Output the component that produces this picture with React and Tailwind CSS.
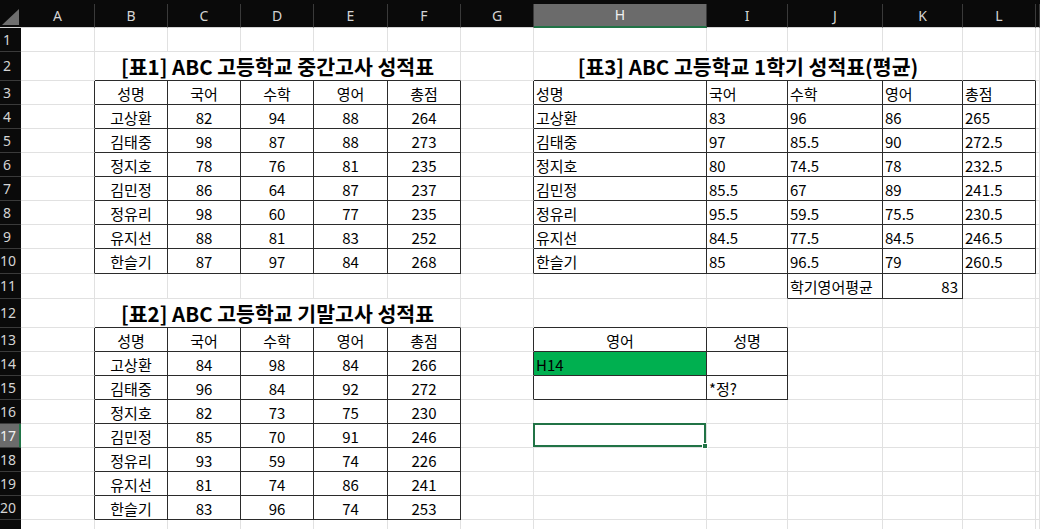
import React from 'react';

const COLS = ['A', 'B', 'C', 'D', 'E', 'F', 'G', 'H', 'I', 'J', 'K', 'L', 'M'];
const ROWS = Array.from({ length: 21 }, (_, i) => i + 1);

const head = ['성명', '국어', '수학', '영어', '총점'];

const t1 = [
    ['고상환', 82, 94, 88, 264],
    ['김태중', 98, 87, 88, 273],
    ['정지호', 78, 76, 81, 235],
    ['김민정', 86, 64, 87, 237],
    ['정유리', 98, 60, 77, 235],
    ['유지선', 88, 81, 83, 252],
    ['한슬기', 87, 97, 84, 268],
];

const t2 = [
    ['고상환', 84, 98, 84, 266],
    ['김태중', 96, 84, 92, 272],
    ['정지호', 82, 73, 75, 230],
    ['김민정', 85, 70, 91, 246],
    ['정유리', 93, 59, 74, 226],
    ['유지선', 81, 74, 86, 241],
    ['한슬기', 83, 96, 74, 253],
];

const t3 = [
    ['고상환', 83, 96, 86, 265],
    ['김태중', 97, 85.5, 90, 272.5],
    ['정지호', 80, 74.5, 78, 232.5],
    ['김민정', 85.5, 67, 89, 241.5],
    ['정유리', 95.5, 59.5, 75.5, 230.5],
    ['유지선', 84.5, 77.5, 84.5, 246.5],
    ['한슬기', 85, 96.5, 79, 260.5],
];

// cell contents keyed by "row-col"
const cells = {};
const put = (r, c, text, align = 'center', fill = '') => {
    cells[`${r}-${c}`] = { text, align, fill };
};

head.forEach((h, i) => {
    put(3, 1 + i, h);
    put(13, 1 + i, h);
    put(3, 7 + i, h, 'left');
});
t1.forEach((row, r) => row.forEach((v, i) => put(4 + r, 1 + i, v)));
t2.forEach((row, r) => row.forEach((v, i) => put(14 + r, 1 + i, v)));
t3.forEach((row, r) => row.forEach((v, i) => put(4 + r, 7 + i, v, 'left')));
put(11, 9, '학기영어평균', 'left');
put(11, 10, '83', 'right');
put(13, 7, '영어');
put(13, 8, '성명');
put(14, 7, 'H14', 'left', 'green');
put(15, 8, '*정?', 'left');

// bordered ranges: [rowFrom, rowTo, colFrom, colTo]
const boxes = [
    [3, 10, 1, 5],
    [13, 20, 1, 5],
    [3, 10, 7, 11],
    [11, 11, 9, 10],
    [13, 15, 7, 8],
];
const inBox = (r, c) => boxes.some(([r1, r2, c1, c2]) => r >= r1 && r <= r2 && c >= c1 && c <= c2);

const merges = {
    '2-1': { span: 5, cls: 'col-span-5', text: '[표1] ABC 고등학교 중간고사 성적표' },
    '2-7': { span: 4, cls: 'col-span-4', text: '[표3] ABC 고등학교 1학기 성적표(평균)' },
    '12-1': { span: 5, cls: 'col-span-5', text: '[표2] ABC 고등학교 기말고사 성적표' },
};

const Cell = ({ r, c }) => {
    const cell = cells[`${r}-${c}`];
    const darkR = inBox(r, c) || inBox(r, c + 1);
    const darkB = inBox(r, c) || inBox(r + 1, c);
    const selected = r === 17 && c === 7;
    const align =
        cell?.align === 'left' ? 'justify-start pl-[2px]' : cell?.align === 'right' ? 'justify-end pr-[4px]' : 'justify-center';

    return (
        <div
            className={`relative flex items-center border-r border-b whitespace-nowrap text-[15px] leading-none text-black ${align} ${
                darkR ? 'border-r-[#2b2b2b]' : 'border-r-[#e1e1e1]'
            } ${darkB ? 'border-b-[#2b2b2b]' : 'border-b-[#e1e1e1]'} ${cell?.fill === 'green' ? 'bg-[#00b050]' : 'bg-white'}`}
        >
            {cell && <span className="pt-[1px]">{cell.text}</span>}
            {selected && (
                <div className="absolute -top-[1px] -left-[1px] w-[calc(100%+1px)] h-[calc(100%+1px)] border-2 border-[#217346] z-10">
                    <div className="absolute -right-[4px] -bottom-[4px] w-[6px] h-[6px] bg-[#217346] border border-white" />
                </div>
            )}
        </div>
    );
};

const Row = ({ r }) => {
    const out = [];
    const hl = r === 17;
    out.push(
        <div
            key="h"
            className={`flex items-center border-b border-b-[#3a3a3a] text-[14px] leading-none font-['Noto_Sans',sans-serif] ${
                r < 10 ? 'pl-[3px]' : 'pl-0'
            } ${hl ? 'bg-[#6b6b6b] text-[#f0f0f0] border-r-2 border-r-[#217346]' : 'bg-[#0a0a0a] text-[#d4d4d4]'}`}
        >
            {r <= 20 ? r : ''}
        </div>
    );
    for (let c = 0; c < COLS.length; c++) {
        const m = merges[`${r}-${c}`];
        if (m) {
            const lastC = c + m.span - 1;
            const darkR = inBox(r, lastC + 1);
            out.push(
                <div
                    key={c}
                    className={`${m.cls} flex items-center justify-center border-r border-b border-b-[#2b2b2b] whitespace-nowrap text-[20.5px] font-bold leading-none text-black ${
                        darkR ? 'border-r-[#2b2b2b]' : 'border-r-[#e1e1e1]'
                    }`}
                >
                    <span className="pt-[1px]">{m.text}</span>
                </div>
            );
            c = lastC;
            continue;
        }
        out.push(<Cell key={c} r={r} c={c} />);
    }
    return out;
};

const Corner = () => (
    <div className="bg-[#0a0a0a] border-b border-b-[#d4d4d4]">
        <svg width="21" height="27" viewBox="0 0 21 27">
            <polygon points="2,25 19,25 19,9" fill="#6e6e6e" />
        </svg>
    </div>
);

const App = () => {
    return (
        <div className="w-[1040px] h-[529px] overflow-hidden bg-white font-['Noto_Sans_CJK_KR','Noto_Sans',sans-serif]">
            <div className="grid grid-cols-[21px_74px_73px_73px_73px_74px_73px_73px_173px_81px_95px_80px_73px_1fr] grid-rows-[28px_24px_29px_24px_24px_24px_24px_24px_24px_24px_25px_25px_29px_24px_24px_24px_24px_24px_24px_24px_24px_24px]">
                <Corner />
                {COLS.map((l) => (
                    <div key={l} className="bg-[#0a0a0a] pt-[4px] overflow-hidden">
                        <div
                            className={`h-full flex items-center justify-center border-r border-r-[#3a3a3a] text-[14px] leading-none font-['Noto_Sans',sans-serif] ${
                                l === 'H'
                                    ? 'bg-[#6b6b6b] text-[#f0f0f0] border-b-2 border-b-[#217346]'
                                    : 'text-[#d4d4d4] border-b border-b-[#d4d4d4]'
                            }`}
                        >
                            {l === 'M' ? '' : l}
                        </div>
                    </div>
                ))}
                {ROWS.map((r) => (
                    <Row key={r} r={r} />
                ))}
            </div>
        </div>
    );
};

export default App;
